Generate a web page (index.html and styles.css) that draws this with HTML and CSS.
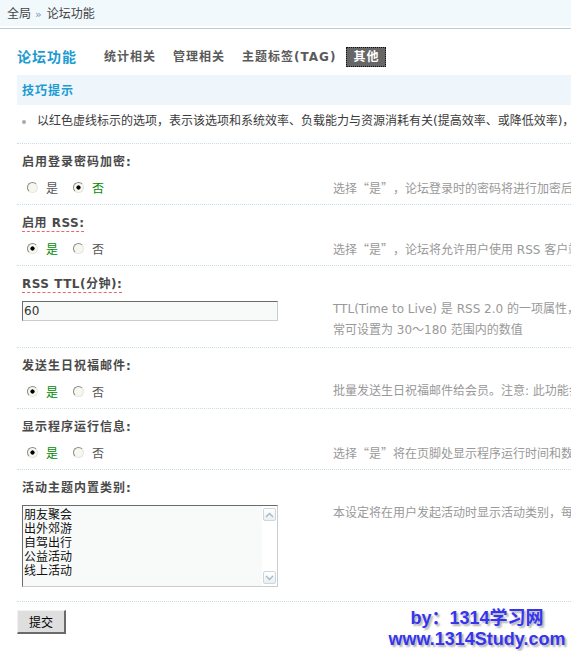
FILE: index.html
```html
<!DOCTYPE html>
<html lang="zh-CN">
<head>
<meta charset="utf-8">
<title>论坛功能</title>
<link rel="stylesheet" href="styles.css">
</head>
<body>
<div class="crumb">全局<span class="arrow">»</span>论坛功能</div>
<div class="main">
  <div class="tabs">
    <h3 class="title">论坛功能</h3>
    <ul class="tablist">
      <li>统计相关</li>
      <li>管理相关</li>
      <li>主题标签(TAG)</li>
      <li class="on">其他</li>
    </ul>
  </div>

  <div class="tiphead">技巧提示</div>
  <ul class="tiplist">
    <li>以红色虚线标示的选项，表示该选项和系统效率、负载能力与资源消耗有关(提高效率、或降低效率)，建议依据自身服务器情况进行调整。</li>
  </ul>

  <div class="row">
    <div class="lbl">启用登录密码加密:</div>
    <div class="cells">
      <div class="cl">
        <div class="radios">
          <label class="opt"><input type="radio" name="r1"><span>是</span></label>
          <label class="opt checked"><input type="radio" name="r1" checked><span>否</span></label>
        </div>
      </div>
      <div class="cr"><div class="ln">选择<span class="q ql">“</span>是<span class="q qr">”</span>，论坛登录时的密码将进行加密后再传输，可以有效防止密码被窃听</div></div>
    </div>
  </div>

  <div class="row">
    <div class="lbl"><span class="perf">启用 RSS:</span></div>
    <div class="cells">
      <div class="cl">
        <div class="radios">
          <label class="opt checked"><input type="radio" name="r2" checked><span>是</span></label>
          <label class="opt"><input type="radio" name="r2"><span>否</span></label>
        </div>
      </div>
      <div class="cr"><div class="ln">选择<span class="q ql">“</span>是<span class="q qr">”</span>，论坛将允许用户使用 RSS 客户端软件接收最新的论坛帖子更新。注意: 在分类很多的情况下，本功能可能会加重服务器负担</div></div>
    </div>
  </div>

  <div class="row">
    <div class="lbl"><span class="perf">RSS TTL(分钟):</span></div>
    <div class="cells">
      <div class="cl">
        <input class="txt" type="text" value="60">
      </div>
      <div class="cr">
        <div class="ln">TTL(Time to Live) 是 RSS 2.0 的一项属性，用于控制订阅内容的自动刷新时间，刷新时间越短则资料实时性就越高，但会加重服务器负担，通</div>
        <div class="ln">常可设置为 30～180 范围内的数值</div>
      </div>
    </div>
  </div>

  <div class="row">
    <div class="lbl">发送生日祝福邮件:</div>
    <div class="cells">
      <div class="cl">
        <div class="radios">
          <label class="opt checked"><input type="radio" name="r4" checked><span>是</span></label>
          <label class="opt"><input type="radio" name="r4"><span>否</span></label>
        </div>
      </div>
      <div class="cr"><div class="ln">批量发送生日祝福邮件给会员。注意: 此功能会加重服务器负担，请根据实际情况选择</div></div>
    </div>
  </div>

  <div class="row">
    <div class="lbl">显示程序运行信息:</div>
    <div class="cells">
      <div class="cl">
        <div class="radios">
          <label class="opt checked"><input type="radio" name="r5" checked><span>是</span></label>
          <label class="opt"><input type="radio" name="r5"><span>否</span></label>
        </div>
      </div>
      <div class="cr"><div class="ln">选择<span class="q ql">“</span>是<span class="q qr">”</span>将在页脚处显示程序运行时间和数据库查询次数</div></div>
    </div>
  </div>

  <div class="row">
    <div class="lbl">活动主题内置类别:</div>
    <div class="cells">
      <div class="cl">
        <div class="ta-wrap">
          <textarea class="ta">朋友聚会
出外郊游
自驾出行
公益活动
线上活动</textarea>
          <div class="sbar">
            <span class="sbtn"><svg width="9" height="6" viewBox="0 0 9 6"><path d="M1 5 L4.5 1.5 L8 5" fill="none" stroke="#a9b4bd" stroke-width="1.3"/></svg></span>
            <span class="sbtn"><svg width="9" height="6" viewBox="0 0 9 6"><path d="M1 1 L4.5 4.5 L8 1" fill="none" stroke="#a9b4bd" stroke-width="1.3"/></svg></span>
          </div>
        </div>
      </div>
      <div class="cr"><div class="ln">本设定将在用户发起活动时显示活动类别，每个类别一行</div></div>
    </div>
  </div>

  <div class="submit">
    <button class="btn" type="button">提交</button>
  </div>
</div>
<div class="mark">by：1314学习网<br>www.1314Study.com</div>
</body>
</html>
```

FILE: styles.css
```css
html, body {
  margin: 0;
  padding: 0;
  overflow: hidden;
  background: #fff;
}
body {
  font: 12px/1.5 "DejaVu Sans", "Noto Sans CJK SC", sans-serif;
  color: #333;
  width: 571px;
  height: 651px;
  position: relative;
}
.crumb {
  height: 26px;
  line-height: 26px;
  padding-left: 7px;
  background: #f2f9fd;
  border-bottom: 2px solid #fff;
  box-shadow: 0 1px 0 #b7cedb;
  color: #444;
  font-family: "Noto Sans CJK SC", sans-serif;
}
.crumb .arrow {
  display: inline-block;
  margin: 0 5px 0 4px;
  color: #7d9bb3;
  font-family: "DejaVu Sans", sans-serif;
  font-size: 11px;
}
.main {
  width: 1100px;
  padding-left: 17px;
}
.tabs {
  display: flex;
  align-items: center;
  height: 20px;
  margin-top: 19px;
}
.title {
  margin: 0 20px 0 0;
  font-size: 14px;
  line-height: 20px;
  letter-spacing: 1px;
  color: #1c9bd0;
  font-weight: bold;
}
.tablist {
  display: flex;
  margin: 0;
  padding: 0;
  list-style: none;
}
.tablist li {
  padding: 0 7px;
  margin-right: 3px;
  height: 20px;
  line-height: 20px;
  font-weight: bold;
  letter-spacing: 1px;
  color: #5a5a5a;
}
.tablist li.on {
  background: #666;
  color: #fff;
  height: 18px;
  line-height: 18px;
  border: 1px dotted #111;
  padding: 0 6px;
}
.tiphead {
  margin-top: 8px;
  height: 30px;
  line-height: 30px;
  padding-left: 5px;
  background: #eef6fc;
  color: #1c9bd0;
  font-weight: bold;
  letter-spacing: 1px;
  font-family: "Noto Sans CJK SC", sans-serif;
}
.tiplist {
  list-style: none;
  margin: 0;
  padding: 6px 0 11px;
}
.tiplist li {
  display: flex;
  align-items: center;
  height: 21px;
  line-height: 21px;
  white-space: nowrap;
  color: #3a3a3a;
}
.tiplist li::before {
  content: "";
  display: inline-block;
  width: 4px;
  height: 4px;
  border-radius: 50%;
  background: #aaa;
  margin: 0 11px 0 5px;
  flex: none;
}
.row {
  border-top: 1px dotted #c8dce9;
}
.lbl {
  padding: 8px 0 0 5px;
  height: 20px;
  line-height: 20px;
  font-weight: bold;
  letter-spacing: 1px;
  color: #4a4a4a;
}
.perf {
  border-bottom: 1px dashed #ee6666;
  padding-bottom: 1px;
  letter-spacing: 0.5px;
}
.cells {
  display: flex;
  padding: 5px 0 6px;
}
.cl {
  width: 316px;
  flex: none;
  padding-left: 5px;
  box-sizing: border-box;
}
.cr {
  color: #999;
  white-space: nowrap;
}
.ln {
  height: 21px;
  line-height: 21px;
}
.q {
  display: inline-block;
  width: 12px;
  font-family: "Noto Sans CJK SC", sans-serif;
}
.ql {
  text-align: right;
}
.qr {
  text-align: left;
}
.radios {
  display: flex;
  align-items: center;
  height: 21px;
}
.opt {
  display: flex;
  align-items: center;
  margin-right: 10px;
  color: #555;
  font-family: "Noto Sans CJK SC", sans-serif;
}
.opt.checked {
  color: #008a00;
}
.opt input {
  -webkit-appearance: none;
  appearance: none;
  width: 11px;
  height: 11px;
  margin: 0 8px 0 5px;
  border-radius: 50%;
  border: 1px solid;
  border-color: #8a8a8a #e6e6e0 #e6e6e0 #8a8a8a;
  background: #f7f7ef;
  box-sizing: border-box;
}
.opt input:checked {
  background: radial-gradient(circle, #000 0 1.8px, #f7f7ef 2.4px);
}
.txt {
  display: block;
  margin: 2px 0 0;
  width: 256px;
  height: 20px;
  box-sizing: border-box;
  border: 1px solid;
  border-color: #6b6b6b #cccccc #cccccc #6b6b6b;
  background: #f8fafa;
  padding: 0 1px;
  font: 12px "DejaVu Sans", sans-serif;
  color: #333;
  outline: none;
}
.ta-wrap {
  position: relative;
  width: 256px;
  margin: 2px 0 8px;
}
.ta {
  display: block;
  width: 256px;
  height: 82px;
  box-sizing: border-box;
  border: 1px solid;
  border-color: #6b6b6b #cccccc #cccccc #6b6b6b;
  background: #f8fafa;
  padding: 1px 17px 0 1px;
  font: 12px/14px "Noto Sans CJK SC", sans-serif;
  color: #111;
  resize: none;
  overflow: hidden;
  outline: none;
}
.sbar {
  position: absolute;
  top: 1px;
  right: 1px;
  bottom: 1px;
  width: 15px;
  background: #fff;
  display: flex;
  flex-direction: column;
  justify-content: space-between;
  align-items: center;
  padding: 2px 0;
  box-sizing: border-box;
}
.sbtn {
  width: 13px;
  height: 13px;
  box-sizing: border-box;
  border: 1px solid #ccd6de;
  border-radius: 2px;
  background: linear-gradient(#ffffff, #e9eff3);
  display: flex;
  align-items: center;
  justify-content: center;
}
.submit {
  border-top: 1px dotted #c8dce9;
  padding-top: 8px;
}
.btn {
  display: block;
  width: 49px;
  height: 24px;
  padding: 0;
  background: #dedede;
  border-style: solid;
  border-width: 1px 2px 2px 1px;
  border-color: #f2f2f2 #6a6a6a #6a6a6a #f2f2f2;
  font: 12px "Noto Sans CJK SC", sans-serif;
  color: #000;
}
.mark {
  position: absolute;
  left: 374px;
  top: 608px;
  width: 206px;
  text-align: center;
  font: bold 18px/21px "Liberation Sans", "Noto Sans CJK SC", sans-serif;
  color: #3535f0;
  text-shadow: 2px 2px 2px #b0b0b0;
  white-space: nowrap;
}
```
